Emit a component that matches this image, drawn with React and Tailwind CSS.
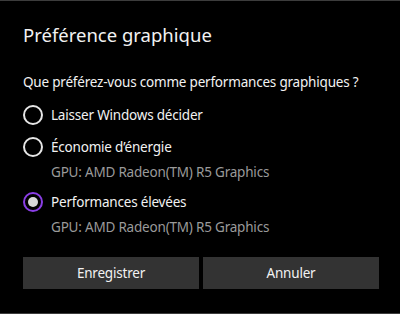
import React from "react";

function Radio({ checked }) {
  return checked ? (
    <span className="flex h-5 w-5 shrink-0 items-center justify-center rounded-full border-2 border-[#8a3ee6]">
      <span className="h-[10px] w-[10px] rounded-full bg-[#d9d9d9]" />
    </span>
  ) : (
    <span className="h-5 w-5 shrink-0 rounded-full border-2 border-[#e6e6e6]" />
  );
}

function Option({ label, gpu, checked }) {
  return (
    <div className="flex flex-col">
      <div className="flex h-8 items-center gap-[8px]">
        <Radio checked={checked} />
        <span className="whitespace-nowrap text-[13.5px] tracking-[-0.2px] text-[#f2f2f2]">{label}</span>
      </div>
      {gpu && (
        <div className="h-[23px] whitespace-nowrap pl-[28px] text-[13.5px] leading-[18px] tracking-[-0.2px] text-[#9a9a9a]">{gpu}</div>
      )}
    </div>
  );
}

export default function App() {
  return (
    <div
      className="flex h-[314px] w-[400px] flex-col border-t border-b border-[#3c3c3c] bg-black pl-[23px] pr-[21px] text-white"
      style={{ fontFamily: '"Segoe UI", "Noto Sans", sans-serif' }}
    >
      <div className="pt-[20px] text-[18.5px] leading-[28px] text-[#f2f2f2]">Préférence graphique</div>
      <div className="mt-[23px] whitespace-nowrap text-[13.5px] leading-[20px] tracking-[-0.2px] text-[#f2f2f2]">
        Que préférez-vous comme performances graphiques ?
      </div>
      <div className="mt-[7px] flex flex-col">
        <Option label="Laisser Windows décider" />
        <Option label="Économie d’énergie" gpu="GPU: AMD Radeon(TM) R5 Graphics" />
        <Option label="Performances élevées" gpu="GPU: AMD Radeon(TM) R5 Graphics" checked />
      </div>
      <div className="mt-auto mb-[24px] flex gap-[4px]">
        <button className="h-[32px] flex-1 bg-[#333333] text-[13.5px] tracking-[-0.2px] text-[#f2f2f2]">Enregistrer</button>
        <button className="h-[32px] flex-1 bg-[#333333] text-[13.5px] tracking-[-0.2px] text-[#f2f2f2]">Annuler</button>
      </div>
    </div>
  );
}
